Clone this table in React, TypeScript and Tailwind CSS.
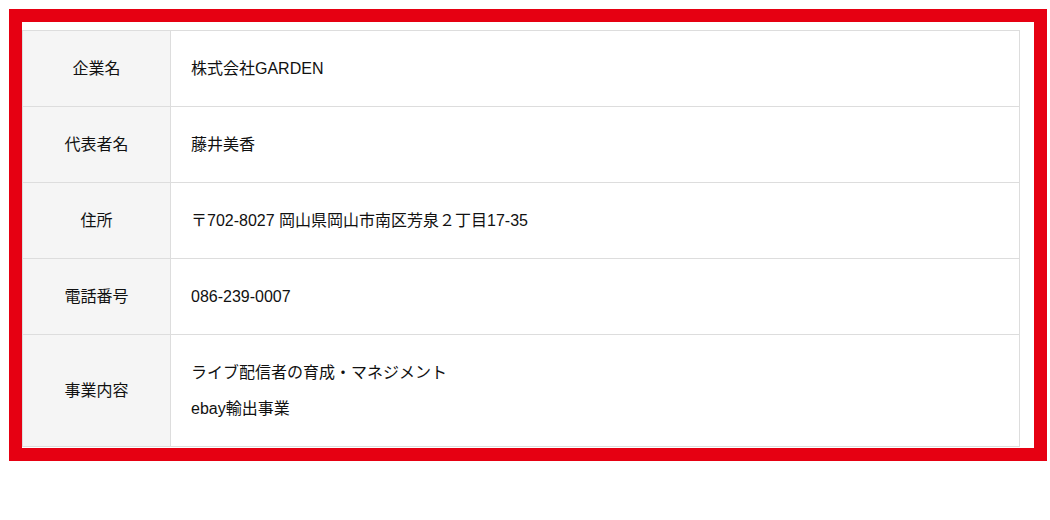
const rows: { label: string; values: string[] }[] = [
  { label: "企業名", values: ["株式会社GARDEN"] },
  { label: "代表者名", values: ["藤井美香"] },
  { label: "住所", values: ["〒702-8027 岡山県岡山市南区芳泉２丁目17-35"] },
  { label: "電話番号", values: ["086-239-0007"] },
  {
    label: "事業内容",
    values: ["ライブ配信者の育成・マネジメント", "ebay輸出事業"],
  },
];

export default function App() {
  return (
    <div
      className="bg-white pt-[9px] pl-[9px] text-[16px] text-[#111]"
      style={{ fontFamily: '"Liberation Sans", "Noto Sans CJK JP", sans-serif' }}
    >
      <div className="w-[1038px] border-[13px] border-[#e60012] bg-white pt-[8px] pr-[1px] pb-[1px]">
        <table className="w-[998px] border-collapse border border-[#dddddd]">
          <tbody>
            {rows.map((row) => (
              <tr key={row.label} className="border-b border-[#dddddd]">
                <th className="w-[148px] border-r border-[#dddddd] bg-[#f5f5f5] text-center font-normal leading-[24px]">
                  {row.label}
                </th>
                <td className="px-[20px] pt-[26px] pb-[25px] leading-[24px]">
                  {row.values.map((v, i) => (
                    <p key={v} className={i > 0 ? "mt-[12px]" : ""}>
                      {v}
                    </p>
                  ))}
                </td>
              </tr>
            ))}
          </tbody>
        </table>
      </div>
    </div>
  );
}
